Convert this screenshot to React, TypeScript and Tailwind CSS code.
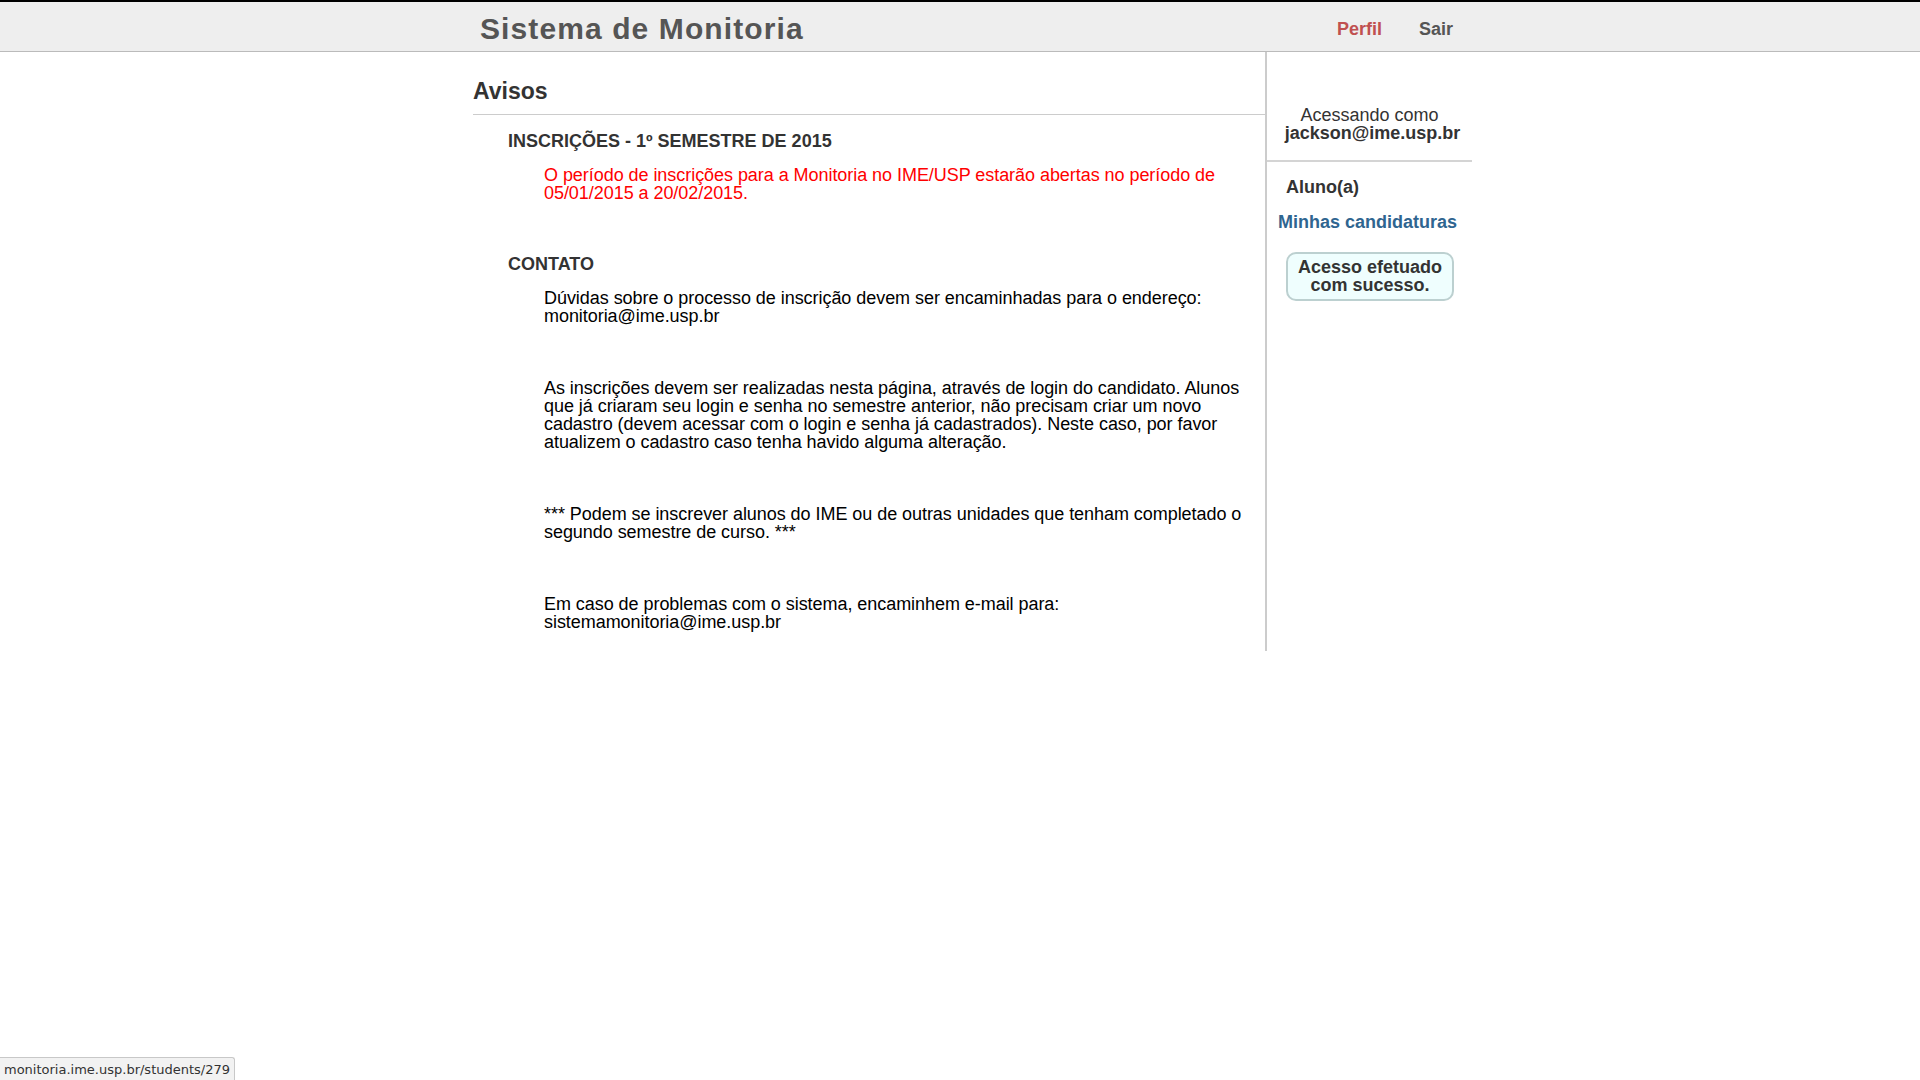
import React from "react";

const font = { fontFamily: '"Liberation Sans", Arial, sans-serif' };

export default function App() {
  return (
    <div className="min-h-[1080px] bg-white text-black" style={font}>
      <header className="h-[52px] border-t-2 border-b border-t-black border-b-[#bbbbbb] bg-[#eeeeee]">
        <div className="mx-auto flex h-full w-[1024px] items-start justify-between pl-[32px] pr-[19px]">
          <h1 className="mt-[12px] text-[30px] font-bold leading-[30px] tracking-[1.1px] text-[#555555]">
            Sistema de Monitoria
          </h1>
          <nav className="mt-[18px] flex gap-[37px] text-[18px] font-bold leading-[18px]">
            <a className="text-[#c05050]">Perfil</a>
            <a className="text-[#555555]">Sair</a>
          </nav>
        </div>
      </header>

      <div className="mx-auto flex w-[1024px] pl-[25px]">
        <main className="w-[792px] pb-[20px]">
          <h2 className="mt-[28px] border-b border-[#cccccc] pb-[11px] text-[23px] font-bold leading-[23px] text-[#333333]">
            Avisos
          </h2>

          <section className="pl-[35px]">
            <h3 className="mt-[17px] text-[18px] font-bold leading-[18px] text-[#333333]">
              INSCRIÇÕES - 1º SEMESTRE DE 2015
            </h3>
            <div className="mt-[16px] pl-[36px] pr-[20px] text-[18px] leading-[18px] tracking-[-0.05px] text-[#ff0000]">
              O período de inscrições para a Monitoria no IME/USP estarão abertas no período de 05/01/2015 a 20/02/2015.
            </div>
          </section>

          <section className="pl-[35px]">
            <h3 className="mt-[53px] text-[18px] font-bold leading-[18px] text-[#333333]">CONTATO</h3>
            <div className="mt-[16px] pl-[36px] pr-[12px] text-[18px] leading-[18px] tracking-[-0.05px] text-black">
              <p>
                Dúvidas sobre o processo de inscrição devem ser encaminhadas para o endereço:
                <br />
                monitoria@ime.usp.br
              </p>
              <p className="mt-[54px]">
                As inscrições devem ser realizadas nesta página, através de login do candidato. Alunos que já criaram seu login e senha no semestre anterior, não precisam criar um novo cadastro (devem acessar com o login e senha já cadastrados). Neste caso, por favor atualizem o cadastro caso tenha havido alguma alteração.
              </p>
              <p className="mt-[54px]">
                *** Podem se inscrever alunos do IME ou de outras unidades que tenham completado o segundo semestre de curso. ***
              </p>
              <p className="mt-[54px]">
                Em caso de problemas com o sistema, encaminhem e-mail para:
                <br />
                sistemamonitoria@ime.usp.br
              </p>
            </div>
          </section>
        </main>

        <aside className="w-[207px] border-l-2 border-[#cccccc]">
          <div className="border-b-2 border-[#d4d4d4] pb-[18px] pt-[54px] text-center text-[18px] leading-[18px] text-[#333333]">
            <div>Acessando como</div>
            <div className="pl-[6px] font-bold">jackson@ime.usp.br</div>
          </div>
          <div className="mt-[16px] pl-[19px] text-[18px] font-bold leading-[18px] text-[#333333]">Aluno(a)</div>
          <a className="mt-[17px] block pl-[11px] text-[18px] font-bold leading-[18px] text-[#2f6590]">
            Minhas candidaturas
          </a>
          <div className="ml-[19px] mt-[21px] w-[168px] rounded-[10px] border-2 border-[#bcd0d0] bg-[#effefe] pb-[5px] pt-[4px] text-center text-[18px] font-bold leading-[18px] text-[#333333]">
            Acesso efetuado
            <br />
            com sucesso.
          </div>
        </aside>
      </div>

      <div
        className="fixed bottom-0 left-0 h-[23px] w-[235px] rounded-tr-[3px] border-r border-t border-[#c8c8c8] bg-[#f2f2f2] pl-[4px] text-[13px] leading-[24px] text-[#333333]"
        style={{ fontFamily: '"DejaVu Sans", sans-serif' }}
      >
        monitoria.ime.usp.br/students/279
      </div>
    </div>
  );
}
